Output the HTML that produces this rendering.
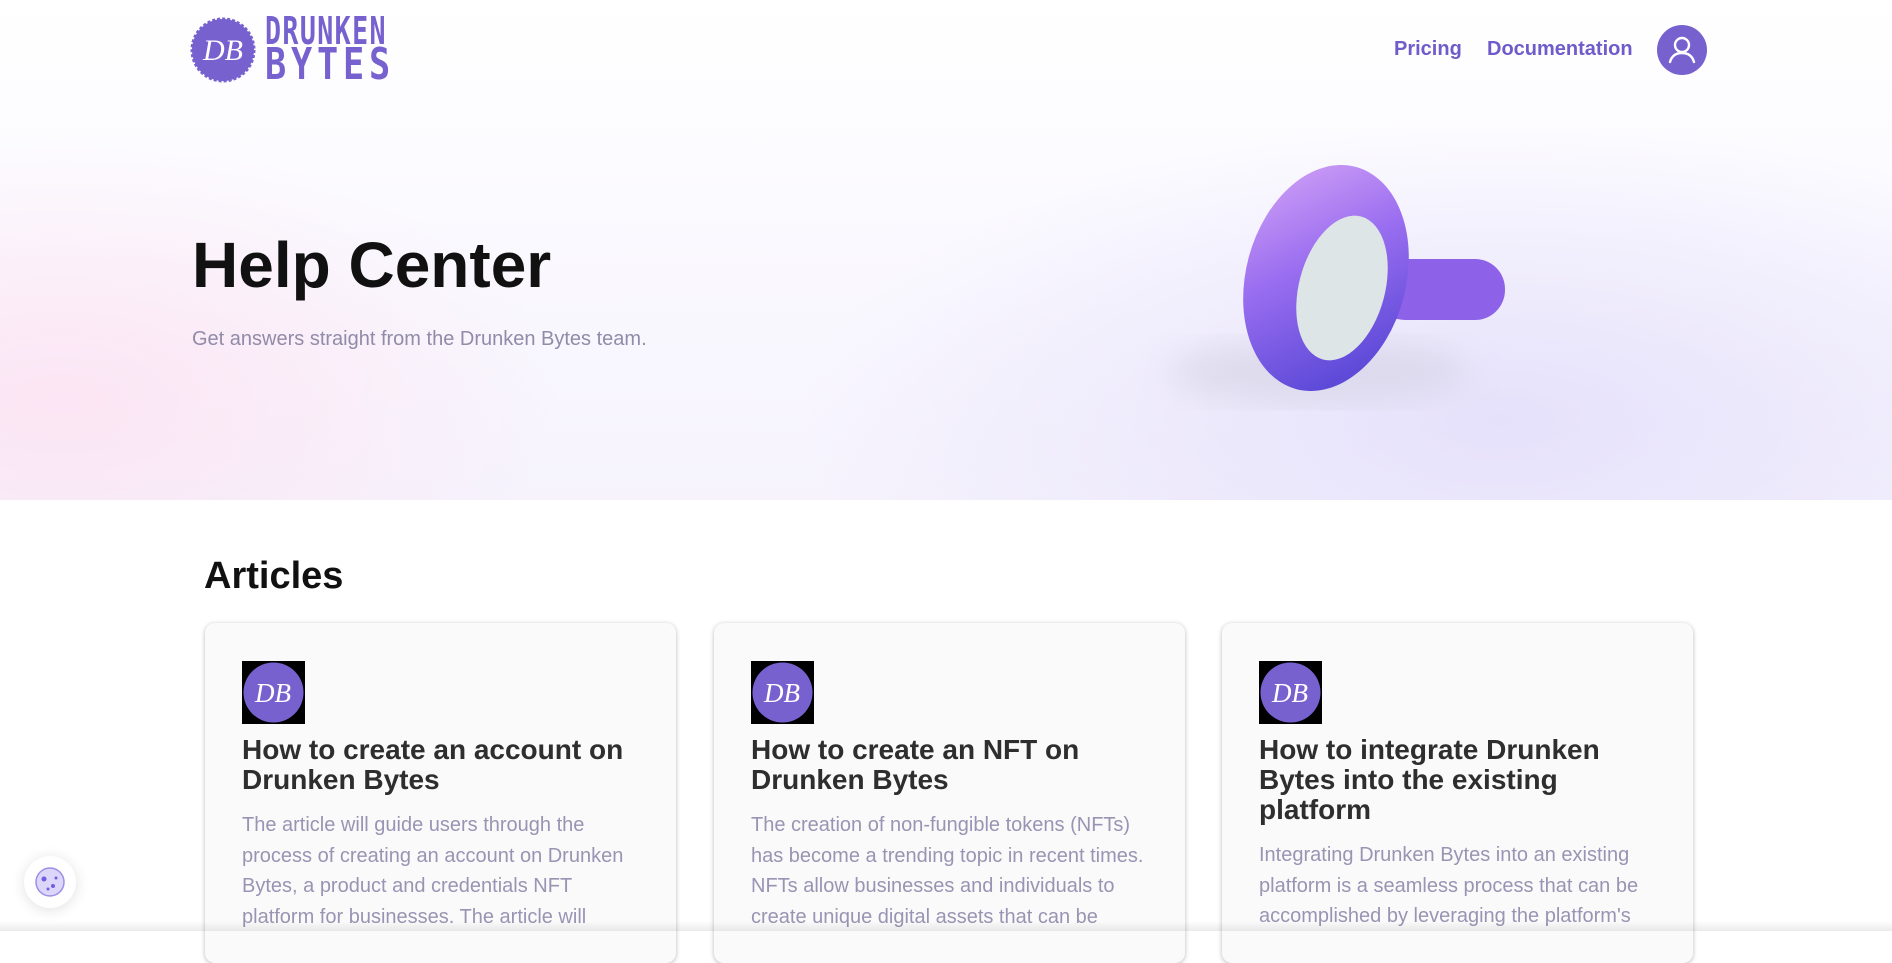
<!DOCTYPE html>
<html><head><meta charset="utf-8"><style>
*{margin:0;padding:0;box-sizing:border-box}
body{width:1892px;height:931px;overflow:hidden;font-family:"Liberation Sans",sans-serif;background:#fff;position:relative}
.hero{position:absolute;left:0;top:0;width:1892px;height:500px;background:
radial-gradient(ellipse 500px 260px at 60px 400px,rgba(255,215,235,.55),transparent),
radial-gradient(ellipse 700px 300px at 1500px 420px,rgba(225,220,250,.8),transparent),
linear-gradient(180deg,#fff 0%,#fbfaff 40%,#f6f3fd 100%)}
.nav a{position:absolute;top:38px;font-size:20px;font-weight:bold;color:#6f5bc9;text-decoration:none}
.card{position:absolute;top:623px;width:471px;height:340px;background:#fafafa;border-radius:10px;box-shadow:0 1px 5px rgba(0,0,0,.28)}
.ic{position:absolute;left:37px;top:38px;width:63px;height:63px;background:#000}
.card h3{position:absolute;left:37px;top:112px;width:410px;font-size:28px;line-height:30px;color:#2e2e2e;font-weight:bold}
.card p{position:absolute;left:37px;width:400px;font-size:20px;line-height:30.5px;color:#9994b3}
</style></head><body>
<div class="hero"></div>
<svg style="position:absolute;left:190px;top:17px" width="66" height="66" viewBox="0 0 66 66">
<circle cx="33" cy="33" r="31" fill="#7661cf" stroke="#7661cf" stroke-width="3" stroke-dasharray="3 2"/>
<text x="33" y="43" text-anchor="middle" font-family="Liberation Serif,serif" font-style="italic" font-size="30" fill="#fff">DB</text></svg>
<div style="position:absolute;left:265px;top:14px;font-size:38px;line-height:34px;color:#7661cf;letter-spacing:2px;font-weight:bold;font-family:'DejaVu Sans Mono',monospace;transform:scaleX(.7);transform-origin:left">DRUNKEN</div>
<div style="position:absolute;left:265px;top:46px;font-size:44px;line-height:38px;color:#7661cf;letter-spacing:6px;font-weight:bold;font-family:'DejaVu Sans Mono',monospace;transform:scaleX(.8);transform-origin:left">BYTES</div>
<div class="nav"><a style="left:1394px">Pricing</a><a style="left:1487px">Documentation</a></div>
<svg style="position:absolute;left:1657px;top:25px" width="50" height="50" viewBox="0 0 50 50"><circle cx="25" cy="25" r="25" fill="#7661cf"/><circle cx="25" cy="20" r="7" fill="none" stroke="#fff" stroke-width="2.4"/><path d="M13 37c2-7 7-9 12-9s10 2 12 9" fill="none" stroke="#fff" stroke-width="2.4" stroke-linecap="round"/></svg>
<div style="position:absolute;left:192px;top:228px;font-size:64px;font-weight:bold;color:#111">Help Center</div>
<div style="position:absolute;left:192px;top:328px;font-size:20px;color:#908ba8">Get answers straight from the Drunken Bytes team.</div>
<svg style="position:absolute;left:1120px;top:150px" width="420" height="270" viewBox="0 0 420 270">
<defs><linearGradient id="g" x1="0" y1="0" x2="0.6" y2="1"><stop offset="0" stop-color="#d9a8f7"/><stop offset=".5" stop-color="#9a6ef0"/><stop offset="1" stop-color="#5d4ad8"/></linearGradient>
<filter id="b"><feGaussianBlur stdDeviation="16"/></filter></defs>
<ellipse cx="200" cy="222" rx="150" ry="32" fill="#d4d2e4" opacity=".6" filter="url(#b)"/>
<rect x="255" y="109" width="130" height="61" rx="30" fill="#8e62e8"/>
<ellipse cx="206" cy="128" rx="80" ry="115" fill="url(#g)" transform="rotate(15 206 128)"/>
<ellipse cx="222" cy="138" rx="43" ry="74" fill="#dde5e6" transform="rotate(15 222 138)"/>
</svg>
<div style="position:absolute;left:204px;top:555px;font-size:38px;font-weight:bold;color:#111">Articles</div>
<div class="card" style="left:205px"><div class="ic"><svg width="63" height="63"><circle cx="31.5" cy="31.5" r="30" fill="#7661cf"/><text x="31" y="41" text-anchor="middle" font-family="Liberation Serif,serif" font-style="italic" font-size="27" fill="#fff">DB</text></svg></div>
<h3>How to create an account on Drunken Bytes</h3><p style="top:187px">The article will guide users through the process of creating an account on Drunken Bytes, a product and credentials NFT platform for businesses. The article will</p></div>
<div class="card" style="left:714px"><div class="ic"><svg width="63" height="63"><circle cx="31.5" cy="31.5" r="30" fill="#7661cf"/><text x="31" y="41" text-anchor="middle" font-family="Liberation Serif,serif" font-style="italic" font-size="27" fill="#fff">DB</text></svg></div>
<h3>How to create an NFT on Drunken Bytes</h3><p style="top:187px">The creation of non-fungible tokens (NFTs) has become a trending topic in recent times. NFTs allow businesses and individuals to create unique digital assets that can be</p></div>
<div class="card" style="left:1222px"><div class="ic"><svg width="63" height="63"><circle cx="31.5" cy="31.5" r="30" fill="#7661cf"/><text x="31" y="41" text-anchor="middle" font-family="Liberation Serif,serif" font-style="italic" font-size="27" fill="#fff">DB</text></svg></div>
<h3>How to integrate Drunken Bytes into the existing platform</h3><p style="top:217px">Integrating Drunken Bytes into an existing platform is a seamless process that can be accomplished by leveraging the platform's</p></div>
<div style="position:absolute;left:24px;top:856px;width:52px;height:52px;border-radius:50%;background:#fff;box-shadow:0 2px 14px rgba(0,0,0,.12)"><svg width="52" height="52"><circle cx="26" cy="26" r="14" fill="#dcd6fa" stroke="#9b8fe8" stroke-width="1.5"/><circle cx="20" cy="23" r="2.5" fill="#6f5ee0"/><circle cx="29" cy="30" r="2" fill="#6f5ee0"/><circle cx="32" cy="22" r="1.5" fill="#6f5ee0"/><circle cx="24" cy="33" r="1.5" fill="#6f5ee0"/></svg></div>
<div style="position:absolute;left:0;top:921px;width:1892px;height:10px;background:linear-gradient(180deg,rgba(0,0,0,0),rgba(0,0,0,.08))"></div>
</body></html>
